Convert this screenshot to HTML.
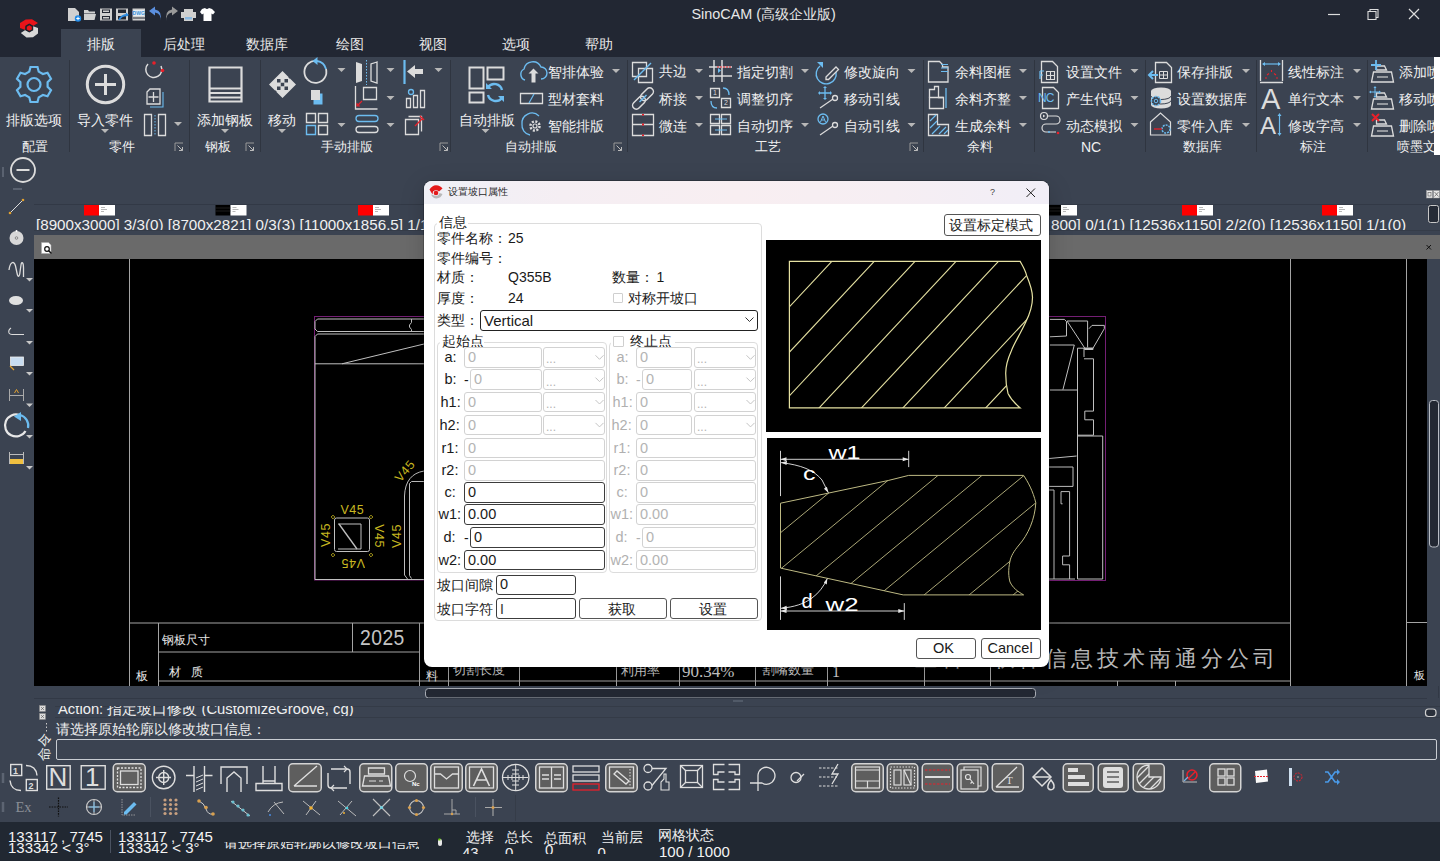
<!DOCTYPE html>
<html><head><meta charset="utf-8">
<style>
*{box-sizing:border-box;margin:0;padding:0}
html,body{width:1440px;height:861px;overflow:hidden;background:#3b4351;font-family:"Liberation Sans",sans-serif;color:#eee;position:relative}
.a{position:absolute}
.t{position:absolute;white-space:nowrap;line-height:1}
svg{position:absolute;overflow:visible}
</style></head><body>
<!-- title bar + tab row -->
<div class="a" style="left:0;top:0;width:1440px;height:57px;background:#222733"></div>
<div class="a" style="left:61px;top:29px;width:80px;height:28px;background:#3b4351"></div>

<!-- logo -->
<svg style="left:20px;top:19px" width="18" height="19" viewBox="0 0 18 19">
<polygon points="0,4 5.7,0.4 12,0.2 18,4 13,7 9,5 5.3,7.7 5.3,11 0,9" fill="#e8141a"/>
<polygon points="0.8,14 5.3,11 9,13 13,11 13,7.3 18,9 18,14.6 13,18.3 6.5,18.5" fill="#d8d8d8"/>
<polygon points="9.3,4.6 13.2,6.8 13.2,11.2 9.3,13.4 5.4,11.2 5.4,6.8" fill="#1b2029"/>
<polygon points="9.3,6.2 11.8,7.7 11.8,10.4 9.3,11.8 6.8,10.4 6.8,7.7" fill="#e8141a"/>
</svg>
<!-- quick access -->
<svg style="left:67px;top:7px" width="146" height="15" viewBox="0 0 146 15">
<path d="M1,1 h7 l4,4 v9 h-11z" fill="#d0d0d0"/><circle cx="11" cy="11.5" r="3.2" fill="#1e88e5"/><path d="M9.3,11.5h3.4M11,9.8v3.4" stroke="#fff" stroke-width="1"/>
<path d="M17,3 h4 l1,1.5 h6 v2 h-11z M17,7 h12 l-1.5,6 h-10.5z" fill="#d0d0d0"/>
<path d="M33,1.5 h12 v12 h-12z" fill="#cfcfcf"/><path d="M35,2.5h8v3.5h-8zM35,9h8v3.5h-8z" fill="#222733"/><path d="M36,3.5h6v1.5h-6zM36,10h6v1.5h-6z" fill="#cfcfcf"/>
<path d="M49,1.5 h12 v12 h-12z" fill="#cfcfcf"/><path d="M51,2.5h8v3.5h-8zM51,9h8v3.5h-8z" fill="#222733"/><path d="M52,13 q2,-5 9,-5" stroke="#2b8ae0" stroke-width="1.8" fill="none"/><path d="M59,5.5 l3,2.5 l-3.5,1.5z" fill="#2b8ae0"/>
<path d="M65.5,1.5 h12.5 v12 h-12.5z" fill="#cfcfcf"/><path d="M66.5,3h10.5v6h-10.5z" fill="#e8eef4"/><text x="71.7" y="8.2" font-size="5" fill="#3a8fd8" text-anchor="middle" font-family="Liberation Sans" font-weight="bold">DWG</text><path d="M66,11h12" stroke="#222733" stroke-width="1"/>
<path d="M93,14 q2,-7 -5,-8.5 v3 l-6,-4.5 l6,-4.5 v3 q8,1.5 5,11.5z" fill="#5b8fdf"/>
<path d="M100,14 q-2,-7 5,-8.5 v3 l6,-4.5 l-6,-4.5 v3 q-8,1.5 -5,11.5z" fill="#9a9a9a"/>
<path d="M117,2h9v3h-9z M114,5h15v6h-15z M117,9h9v5h-9z" fill="#d0d0d0"/><path d="M118,10h7v2.5h-7z" fill="#8ab8e0"/>
<path d="M135,2 l3,-1 q2,2 4,0 l3,1 l3,3 l-2,2.5 l-1.5,-1 v7.5 h-8 v-7.5 l-1.5,1 l-2,-2.5z" fill="#fff"/>
</svg>
<div class="t" style="left:691.5px;top:7px;font-size:14.4px;color:#e8e8e8;letter-spacing:0">SinoCAM (高级企业版)</div>
<!-- window controls -->
<svg style="left:1328px;top:6px" width="95" height="16" viewBox="0 0 95 16">
<path d="M0,8.5h12" stroke="#ddd" stroke-width="1.2"/>
<path d="M40,5.5h8v8h-8z M42,5.5v-2h8v8h-2" stroke="#ddd" stroke-width="1.1" fill="none"/>
<path d="M81,3l10,10M91,3l-10,10" stroke="#ddd" stroke-width="1.2"/>
</svg>
<!-- tabs -->
<div class="t" style="left:87px;top:37px;font-size:14px;color:#f0f0f0">排版</div>
<div class="t" style="left:163px;top:37px;font-size:14px;color:#e8e8e8">后处理</div>
<div class="t" style="left:246px;top:37px;font-size:14px;color:#e8e8e8">数据库</div>
<div class="t" style="left:336px;top:37px;font-size:14px;color:#e8e8e8">绘图</div>
<div class="t" style="left:419px;top:37px;font-size:14px;color:#e8e8e8">视图</div>
<div class="t" style="left:502px;top:37px;font-size:14px;color:#e8e8e8">选项</div>
<div class="t" style="left:585px;top:37px;font-size:14px;color:#e8e8e8">帮助</div>
<!-- ribbon -->
<div class="a" style="left:0;top:57px;width:1440px;height:100px;background:#3b4351"></div>
<!--RIBBON--><div class="a" style="left:0;top:0;width:1435px;height:160px;overflow:hidden"><svg style="left:0;top:0" width="1440" height="160" viewBox="0 0 1440 160"><path d="M69.5,60v92" stroke="#2f3540" stroke-width="1"/><path d="M189.5,60v92" stroke="#2f3540" stroke-width="1"/><path d="M260.5,60v92" stroke="#2f3540" stroke-width="1"/><path d="M450.5,60v92" stroke="#2f3540" stroke-width="1"/><path d="M627.5,60v92" stroke="#2f3540" stroke-width="1"/><path d="M923.5,60v92" stroke="#2f3540" stroke-width="1"/><path d="M1034.5,60v92" stroke="#2f3540" stroke-width="1"/><path d="M1145.5,60v92" stroke="#2f3540" stroke-width="1"/><path d="M1256.5,60v92" stroke="#2f3540" stroke-width="1"/><path d="M1367.5,60v92" stroke="#2f3540" stroke-width="1"/><g transform="translate(34,84.5)" fill="none" stroke="#6cbcf0" stroke-width="2.2"><path d="M-3.5,-17.5h7l1.2,4.6l4.2,2.4l4.6,-1.3l3.5,6l-3.4,3.4v4.8l3.4,3.4l-3.5,6l-4.6,-1.3l-4.2,2.4l-1.2,4.6h-7l-1.2,-4.6l-4.2,-2.4l-4.6,1.3l-3.5,-6l3.4,-3.4v-4.8l-3.4,-3.4l3.5,-6l4.6,1.3l4.2,-2.4z"/><circle r="6.5"/></g><circle cx="105.5" cy="84.5" r="18.2" fill="none" stroke="#dcdcdc" stroke-width="3"/><path d="M105.5,74v21M95,84.5h21" stroke="#dcdcdc" stroke-width="3"/><path d="M101,129h8l-4,4z" fill="#b8b8b8"/><path d="M161,66 a8,8 0 1 1 -13,-2" fill="none" stroke="#dcdcdc" stroke-width="1.5"/><circle cx="154" cy="63" r="1.8" fill="#e8202a"/><circle cx="162.5" cy="70.5" r="1.8" fill="#e8202a"/><path d="M147,92l3,-3h10v15h-13z" fill="none" stroke="#dcdcdc" stroke-width="1.3"/><path d="M150,107h13v-15" fill="none" stroke="#6cbcf0" stroke-width="1.1"/><path d="M153.5,92v10M148.5,97h10" stroke="#dcdcdc" stroke-width="1.3"/><path d="M144.5,114.5h7v21h-7zM158.5,114.5h7v21h-7z" fill="none" stroke="#dcdcdc" stroke-width="1.3"/><path d="M155,115v20" stroke="#6cbcf0" stroke-width="1" stroke-dasharray="1.5,1.5"/><path d="M174,122h8l-4,4z" fill="#b8b8b8"/><path d="M175,151v-8h8" stroke="#999" stroke-width="1" fill="none"/><path d="M177.5,145.5l5,5M182.5,147v3.5h-3.5" stroke="#bbb" stroke-width="1" fill="none"/><path d="M209.5,67.5h32v34h-32z" fill="none" stroke="#dcdcdc" stroke-width="2.2"/><path d="M209.5,88.5h32M209.5,93h32M209.5,97.5h32" stroke="#dcdcdc" stroke-width="1.8"/><path d="M221,129h8l-4,4z" fill="#b8b8b8"/><path d="M246,151v-8h8" stroke="#999" stroke-width="1" fill="none"/><path d="M248.5,145.5l5,5M253.5,147v3.5h-3.5" stroke="#bbb" stroke-width="1" fill="none"/><path d="M282.5,71L290,78.5H275zM282.5,98L290,90.5H275zM269,84.5L276.5,77V92zM296,84.5L288.5,77V92z" fill="#dcdcdc"/><rect x="276" y="78" width="13" height="13" fill="#dcdcdc"/><path d="M277,79h3.5v3.5h-3.5zM284.5,79h3.5v3.5h-3.5zM280.75,82.75h3.5v3.5h-3.5zM277,86.5h3.5v3.5h-3.5zM284.5,86.5h3.5v3.5h-3.5z" fill="#3b4351"/><path d="M278,129h8l-4,4z" fill="#b8b8b8"/><path d="M326,69 a11,11 0 1 1 -9,-8" fill="none" stroke="#dcdcdc" stroke-width="1.8"/><path d="M317,61 a11,11 0 0 1 9,8" fill="none" stroke="#6cbcf0" stroke-width="1.8"/><path d="M312.5,61l5,-4v8z" fill="#6cbcf0"/><path d="M313.5,93.5h9v11h-9z" fill="#6cbcf0"/><path d="M311,90h9v10h-9z" fill="#dcdcdc"/><path d="M306.5,113.5h9v9h-9zM318.5,113.5h9v9h-9zM318.5,125.5h9v9h-9z" fill="none" stroke="#dcdcdc" stroke-width="1.4"/><path d="M306.5,125.5h9v9h-9z" fill="none" stroke="#6cbcf0" stroke-width="1.4"/><path d="M337.5,68h8l-4,4z" fill="#b8b8b8"/><path d="M337.5,123h8l-4,4z" fill="#b8b8b8"/><path d="M356,62l6,2v17l-6,2z" fill="#dcdcdc"/><path d="M377,62l-6,2v17l6,2z" fill="none" stroke="#dcdcdc" stroke-width="1.3"/><path d="M366.5,60v25" stroke="#6cbcf0" stroke-width="1" stroke-dasharray="1.5,1.5"/><path d="M355.5,86v23h22" fill="none" stroke="#dcdcdc" stroke-width="1.3"/><path d="M363.5,87.5h13v12h-13z" fill="none" stroke="#dcdcdc" stroke-width="1.3"/><path d="M362,101l-5,5m0,-3v3h3" fill="none" stroke="#e8202a" stroke-width="1.2"/><path d="M359,115.5h16a2.5,2.5 0 0 1 0,6h-16a2.5,2.5 0 0 1 0,-6z" fill="none" stroke="#6cbcf0" stroke-width="1.3"/><path d="M359,126.5h16a2.5,2.5 0 0 1 0,6h-16a2.5,2.5 0 0 1 0,-6z" fill="none" stroke="#dcdcdc" stroke-width="1.3"/><path d="M386.5,68h8l-4,4z" fill="#b8b8b8"/><path d="M386.5,96h8l-4,4z" fill="#b8b8b8"/><path d="M386.5,123h8l-4,4z" fill="#b8b8b8"/><path d="M404.5,60v24" stroke="#6cbcf0" stroke-width="2.2"/><path d="M407,71.5l8,-6.5v4h8v5h-8v4z" fill="#dcdcdc"/><path d="M406.5,98.5h4v9h-4zM413.5,95.5h4v12h-4zM420.5,90.5h4v17h-4z" fill="none" stroke="#dcdcdc" stroke-width="1.3"/><circle cx="411" cy="92" r="2.5" fill="none" stroke="#6cbcf0" stroke-width="1.3"/><path d="M405.5,119.5h13v15h-13z" fill="none" stroke="#dcdcdc" stroke-width="1.3"/><path d="M408.5,116.5h13v15" fill="none" stroke="#dcdcdc" stroke-width="1.3"/><path d="M415,126l7,-7M420,116l4,4" stroke="#e8202a" stroke-width="1.4"/><path d="M434.5,68h8l-4,4z" fill="#b8b8b8"/><path d="M440,151v-8h8" stroke="#999" stroke-width="1" fill="none"/><path d="M442.5,145.5l5,5M447.5,147v3.5h-3.5" stroke="#bbb" stroke-width="1" fill="none"/><path d="M469.5,67.5h14v21h-14zM487.5,67.5h16v12h-16zM469.5,92.5h14v10h-14z" fill="none" stroke="#dcdcdc" stroke-width="2"/><path d="M502,90a8,8 0 0 0 -14,-3M488,95a8,8 0 0 0 14,3" fill="none" stroke="#6cbcf0" stroke-width="2.4"/><path d="M486,83v6h6z M504,102v-6h-6z" fill="#6cbcf0"/><path d="M481.5,129h8l-4,4z" fill="#b8b8b8"/><path d="M525,80a6,6 0 0 1 -1,-11a9,9 0 0 1 17,-2a6,6 0 0 1 0,12" fill="none" stroke="#6cbcf0" stroke-width="1.4"/><path d="M531.5,82.5v-9h-3l5,-5l5,5h-3v9z" fill="#dcdcdc"/><path d="M612,69h8l-4,4z" fill="#b8b8b8"/><path d="M520.5,93.5h22v10h-22z" fill="none" stroke="#dcdcdc" stroke-width="1.3"/><path d="M529,103l5,-9" stroke="#6cbcf0" stroke-width="1.2"/><path d="M530,135a10,10 0 0 1 -8,-11a10,10 0 0 1 17,-8" fill="none" stroke="#6cbcf0" stroke-width="1.3"/><circle cx="535" cy="126" r="4.5" fill="none" stroke="#dcdcdc" stroke-width="2.5" stroke-dasharray="2,1.5"/><circle cx="535" cy="126" r="2" fill="none" stroke="#dcdcdc" stroke-width="1.2"/><path d="M614,151v-8h8" stroke="#999" stroke-width="1" fill="none"/><path d="M616.5,145.5l5,5M621.5,147v3.5h-3.5" stroke="#bbb" stroke-width="1" fill="none"/><path d="M632.5,62.5h14v14h-14zM638.5,68.5h14v14h-14z" fill="none" stroke="#dcdcdc" stroke-width="1.3"/><path d="M634,80l17,-17" stroke="#6cbcf0" stroke-width="1.4"/><path d="M695,69h8l-4,4z" fill="#b8b8b8"/><g fill="none" stroke="#dcdcdc" stroke-width="1.5"><rect x="631.5" y="99" width="15" height="7.5" rx="3.75" transform="rotate(-45 639 102.75)"/><rect x="639.5" y="90.5" width="15" height="7.5" rx="3.75" transform="rotate(-45 647 94.25)"/></g><path d="M639.5,102l7,-7" stroke="#6cbcf0" stroke-width="1.4"/><path d="M695,96h8l-4,4z" fill="#b8b8b8"/><path d="M632.5,114.5h21v21h-21zM632.5,124.5h21" fill="none" stroke="#dcdcdc" stroke-width="1.3"/><path d="M642,114h2v1.5h-2zM642,123.5h2v2h-2zM642,134.5h2v1.5h-2z" fill="#e8202a"/><path d="M695,123h8l-4,4z" fill="#b8b8b8"/><path d="M714,60v22M722,60v22M709,67h23M709,76h23" stroke="#dcdcdc" stroke-width="1.5"/><path d="M717,67h15" stroke="#e8202a" stroke-width="1" stroke-dasharray="2,1"/><path d="M718,68v5l3,-2.5z" fill="#6cbcf0"/><path d="M801,69h8l-4,4z" fill="#b8b8b8"/><path d="M710.5,88.5h9v9h-9zM721.5,98.5h9v9h-9z" fill="none" stroke="#dcdcdc" stroke-width="1.3"/><path d="M723,88q6,0 6,7M717,108q-6,0 -6,-7" fill="none" stroke="#6cbcf0" stroke-width="1.3"/><path d="M710.5,114.5h9v9h-9zM721.5,114.5h9v9h-9zM710.5,125.5h9v9h-9zM721.5,125.5h9v9h-9z" fill="none" stroke="#dcdcdc" stroke-width="1.3"/><path d="M715,119h12M715,130h12" stroke="#6cbcf0" stroke-width="1.2"/><path d="M801,123h8l-4,4z" fill="#b8b8b8"/><path d="M820,66a10,10 0 1 0 16,6" fill="none" stroke="#6cbcf0" stroke-width="1.4"/><path d="M817,62h6v6z" fill="#6cbcf0"/><path d="M826,77l10,-10l2.5,2.5l-10,10h-2.5z" fill="none" stroke="#dcdcdc" stroke-width="1.3"/><path d="M907.5,69h8l-4,4z" fill="#b8b8b8"/><path d="M825,87v12M819,93h12" stroke="#6cbcf0" stroke-width="1.3"/><path d="M825,86l-2,2h4zM825,100l-2,-2h4zM818,93l2,-2v4zM832,93l-2,-2v4z" fill="#6cbcf0"/><path d="M820,108l13,-9" stroke="#dcdcdc" stroke-width="1.2"/><circle cx="835" cy="98" r="2.5" fill="none" stroke="#dcdcdc" stroke-width="1.3"/><circle cx="823" cy="119" r="5" fill="none" stroke="#6cbcf0" stroke-width="1.3"/><path d="M820.5,122l2.5,-6l2.5,6M821.5,120h3" fill="none" stroke="#6cbcf0" stroke-width="1"/><path d="M820,135l13,-9" stroke="#dcdcdc" stroke-width="1.2"/><circle cx="835" cy="125" r="2.5" fill="none" stroke="#dcdcdc" stroke-width="1.3"/><path d="M907.5,123h8l-4,4z" fill="#b8b8b8"/><path d="M910,151v-8h8" stroke="#999" stroke-width="1" fill="none"/><path d="M912.5,145.5l5,5M917.5,147v3.5h-3.5" stroke="#bbb" stroke-width="1" fill="none"/><path d="M928.5,61.5h11l3,3v2.5h5.5v15h-19.5z" fill="none" stroke="#dcdcdc" stroke-width="1.3"/><path d="M941,64.5h7M941,68h7M941,71.5h7" stroke="#6cbcf0" stroke-width="1.1"/><path d="M1019,69h8l-4,4z" fill="#b8b8b8"/><path d="M929.5,97.5v-8h5v-3h4v11h5" fill="none" stroke="#dcdcdc" stroke-width="1.3"/><path d="M929.5,97.5h14v11h-14z" fill="none" stroke="#dcdcdc" stroke-width="1.3"/><path d="M946,88v20" stroke="#6cbcf0" stroke-width="1.3"/><path d="M1019,96h8l-4,4z" fill="#b8b8b8"/><path d="M928.5,114.5h9v10h11v11h-20z" fill="none" stroke="#dcdcdc" stroke-width="1.3"/><path d="M930,121l6,-6M930,128l7,-7M932,134l8,-8M939,134l7,-7M944,134l4,-4" stroke="#6cbcf0" stroke-width="1.2"/><path d="M1019,123h8l-4,4z" fill="#b8b8b8"/><path d="M1041.5,61.5h11l5,5v16h-16z" fill="none" stroke="#dcdcdc" stroke-width="1.3"/><path d="M1046.5,71.5h8v8h-8zM1050.5,71.5v8M1046.5,75.5h8" fill="none" stroke="#dcdcdc" stroke-width="1.1"/><path d="M1040,71v8M1040,71h4M1040,75h3" stroke="#6cbcf0" stroke-width="1.2" fill="none"/><path d="M1130.5,69h8l-4,4z" fill="#b8b8b8"/><path d="M1042.5,87.5h11l5,5v16h-16z" fill="none" stroke="#dcdcdc" stroke-width="1.3"/><path d="M1130.5,96h8l-4,4z" fill="#b8b8b8"/><circle cx="1044" cy="116" r="3.5" fill="none" stroke="#dcdcdc" stroke-width="1.2"/><path d="M1043,114.5v3l2.3,-1.5z" fill="#dcdcdc"/><path d="M1048,116h8a4,4 0 0 1 0,8h-10a4,4 0 0 0 0,8h10" fill="none" stroke="#dcdcdc" stroke-width="1.2"/><circle cx="1058" cy="133" r="1.3" fill="#e8202a"/><circle cx="1049" cy="132" r="1" fill="#6cbcf0"/><path d="M1130.5,123h8l-4,4z" fill="#b8b8b8"/><path d="M1155.5,62.5h11l5,5v15h-16z" fill="none" stroke="#dcdcdc" stroke-width="1.3"/><path d="M1159.5,71.5h8v7h-8zM1163.5,71.5v7M1159.5,75h8" fill="none" stroke="#dcdcdc" stroke-width="1"/><path d="M1149,75h9M1153,71l-4,4l4,4" stroke="#6cbcf0" stroke-width="2" fill="none"/><path d="M1242,69h8l-4,4z" fill="#b8b8b8"/><ellipse cx="1161" cy="91" rx="10" ry="3.5" fill="#dcdcdc"/><path d="M1151,91v14a10,3.5 0 0 0 20,0v-14" fill="#dcdcdc"/><path d="M1151,96a10,3.5 0 0 0 20,0M1151,100.5a10,3.5 0 0 0 20,0" fill="none" stroke="#3b4351" stroke-width="1"/><circle cx="1156" cy="101" r="4.5" fill="#3b4351" stroke="#6cbcf0" stroke-width="1.6" stroke-dasharray="2,1.2"/><circle cx="1156" cy="101" r="1.8" fill="none" stroke="#6cbcf0" stroke-width="1"/><path d="M1150.5,122l10,-9l10,9v13h-20z" fill="none" stroke="#dcdcdc" stroke-width="1.2"/><circle cx="1166" cy="129" r="4" fill="#3b4351" stroke="#6cbcf0" stroke-width="1.5" stroke-dasharray="2,1"/><path d="M1154,129h8" stroke="#e8202a" stroke-width="1.3"/><path d="M1242,123h8l-4,4z" fill="#b8b8b8"/><path d="M1260.5,60v21M1282.5,60v21M1260,82.5h23" stroke="#dcdcdc" stroke-width="1.3"/><path d="M1263,64h17" stroke="#6cbcf0" stroke-width="1.2"/><path d="M1262,64l3,-2v4zM1281,64l-3,-2v4z" fill="#6cbcf0"/><path d="M1267,75l2,-1.5M1276,75l-2,-1.5M1271.5,70v2M1265,78h2M1276,78h2" stroke="#e8202a" stroke-width="1.1"/><path d="M1353,69h8l-4,4z" fill="#b8b8b8"/><path d="M1353,96h8l-4,4z" fill="#b8b8b8"/><path d="M1279.5,115v19" stroke="#6cbcf0" stroke-width="1.2"/><path d="M1279.5,113l-2,3h4zM1279.5,136l-2,-3h4z" fill="#6cbcf0"/><path d="M1353,123h8l-4,4z" fill="#b8b8b8"/><path d="M1376.5,66h8l2,4h-10zM1373.5,72h18l2,10h-22z" fill="none" stroke="#dcdcdc" stroke-width="1.3"/><path d="M1377,77h11" stroke="#dcdcdc" stroke-width="1.1"/><path d="M1376,60v10M1371,65h10" stroke="#6cbcf0" stroke-width="1.8"/><path d="M1376.5,93h8l2,4h-10zM1373.5,99h18l2,10h-22z" fill="none" stroke="#dcdcdc" stroke-width="1.3"/><path d="M1377,104h11" stroke="#dcdcdc" stroke-width="1.1"/><path d="M1375,87v10M1370,92h10" stroke="#6cbcf0" stroke-width="1"/><path d="M1375,86l-1.5,2h3zM1375,98l-1.5,-2h3zM1369,92l2,-1.5v3zM1381,92l-2,-1.5v3z" fill="#6cbcf0"/><path d="M1376.5,120h8l2,4h-10zM1373.5,126h18l2,10h-22z" fill="none" stroke="#dcdcdc" stroke-width="1.3"/><path d="M1377,131h11" stroke="#dcdcdc" stroke-width="1.1"/><path d="M1372,114l7,7M1379,114l-7,7" stroke="#e8202a" stroke-width="2"/></svg><div class="t" style="left:6px;top:112.5px;font-size:14px;color:#f0f0f0">排版选项</div><div class="t" style="left:21.5px;top:140.0px;font-size:13px;color:#f0f0f0">配置</div><div class="t" style="left:77px;top:112.5px;font-size:14px;color:#f0f0f0">导入零件</div><div class="t" style="left:108.5px;top:140.0px;font-size:13px;color:#f0f0f0">零件</div><div class="t" style="left:197px;top:112.5px;font-size:14px;color:#f0f0f0">添加钢板</div><div class="t" style="left:204.5px;top:140.0px;font-size:13px;color:#f0f0f0">钢板</div><div class="t" style="left:268px;top:112.5px;font-size:14px;color:#f0f0f0">移动</div><div class="t" style="left:321.0px;top:140.0px;font-size:13px;color:#f0f0f0">手动排版</div><div class="t" style="left:459px;top:112.5px;font-size:14px;color:#f0f0f0">自动排版</div><div class="t" style="left:548px;top:64.5px;font-size:14px;color:#f0f0f0">智排体验</div><div class="t" style="left:548px;top:91.5px;font-size:14px;color:#f0f0f0">型材套料</div><div class="t" style="left:548px;top:118.5px;font-size:14px;color:#f0f0f0">智能排版</div><div class="t" style="left:504.5px;top:140.0px;font-size:13px;color:#f0f0f0">自动排版</div><div class="t" style="left:659px;top:63.5px;font-size:14px;color:#f0f0f0">共边</div><div class="t" style="left:659px;top:91.5px;font-size:14px;color:#f0f0f0">桥接</div><div class="t" style="left:659px;top:118.5px;font-size:14px;color:#f0f0f0">微连</div><div class="t" style="left:737px;top:64.5px;font-size:14px;color:#f0f0f0">指定切割</div><div class="t" style="left:713px;top:89px;font-size:7px;color:#ddd">1</div><div class="t" style="left:724px;top:99px;font-size:7px;color:#ddd">2</div><div class="t" style="left:737px;top:91.5px;font-size:14px;color:#f0f0f0">调整切序</div><div class="t" style="left:737px;top:118.5px;font-size:14px;color:#f0f0f0">自动切序</div><div class="t" style="left:844px;top:64.5px;font-size:14px;color:#f0f0f0">修改旋向</div><div class="t" style="left:844px;top:91.5px;font-size:14px;color:#f0f0f0">移动引线</div><div class="t" style="left:844px;top:118.5px;font-size:14px;color:#f0f0f0">自动引线</div><div class="t" style="left:754.5px;top:140.0px;font-size:13px;color:#f0f0f0">工艺</div><div class="t" style="left:955px;top:64.5px;font-size:14px;color:#f0f0f0">余料图框</div><div class="t" style="left:955px;top:91.5px;font-size:14px;color:#f0f0f0">余料齐整</div><div class="t" style="left:955px;top:118.5px;font-size:14px;color:#f0f0f0">生成余料</div><div class="t" style="left:967.0px;top:140.0px;font-size:13px;color:#f0f0f0">余料</div><div class="t" style="left:1066px;top:64.5px;font-size:14px;color:#f0f0f0">设置文件</div><div class="t" style="left:1038px;top:92px;font-size:12px;color:#6cbcf0;letter-spacing:-1px">NC</div><div class="t" style="left:1066px;top:91.5px;font-size:14px;color:#f0f0f0">产生代码</div><div class="t" style="left:1066px;top:118.5px;font-size:14px;color:#f0f0f0">动态模拟</div><div class="t" style="left:1081px;top:139.5px;font-size:14px;color:#f0f0f0">NC</div><div class="t" style="left:1177px;top:64.5px;font-size:14px;color:#f0f0f0">保存排版</div><div class="t" style="left:1177px;top:91.5px;font-size:14px;color:#f0f0f0">设置数据库</div><div class="t" style="left:1177px;top:118.5px;font-size:14px;color:#f0f0f0">零件入库</div><div class="t" style="left:1182.5px;top:140.0px;font-size:13px;color:#f0f0f0">数据库</div><div class="t" style="left:1288px;top:64.5px;font-size:14px;color:#f0f0f0">线性标注</div><div class="t" style="left:1261px;top:84.5px;font-size:29px;color:#dcdcdc">A</div><div class="t" style="left:1288px;top:91.5px;font-size:14px;color:#f0f0f0">单行文本</div><div class="t" style="left:1260px;top:113.5px;font-size:24px;color:#dcdcdc">A</div><div class="t" style="left:1288px;top:118.5px;font-size:14px;color:#f0f0f0">修改字高</div><div class="t" style="left:1300.0px;top:140.0px;font-size:13px;color:#f0f0f0">标注</div><div class="t" style="left:1399px;top:64.5px;font-size:14px;color:#f0f0f0">添加喷墨</div><div class="t" style="left:1399px;top:91.5px;font-size:14px;color:#f0f0f0">移动喷墨</div><div class="t" style="left:1399px;top:118.5px;font-size:14px;color:#f0f0f0">删除喷墨</div><div class="t" style="left:1397px;top:140.0px;font-size:13px;color:#f0f0f0">喷墨文本</div></div><div class="a" style="left:1434px;top:57px;width:6px;height:98px;background:#fff"></div><!--/RIBBON-->
<!-- tab strip -->
<div class="a" style="left:34px;top:204px;width:1406px;height:28px;background:#3b4351;border-top:1px solid #323946"></div>
<!-- canvas header -->
<div class="a" style="left:34px;top:235px;width:1406px;height:24px;background:#6a6a6a"></div>
<!-- canvas -->
<div class="a" style="left:34px;top:259px;width:1393px;height:427px;background:#000"></div>
<!--CANVAS--><svg style="left:0;top:0" width="1440" height="861" viewBox="0 0 1440 861"><path d="M3,167v10" stroke="#5a6270" stroke-width="2"/><path d="M13,189h9" stroke="#5a6270" stroke-width="2"/><circle cx="23" cy="170" r="12" fill="none" stroke="#dcdcdc" stroke-width="1.8"/><path d="M16.5,170h13" stroke="#dcdcdc" stroke-width="2"/><path d="M10,213l13,-13" stroke="#dcdcdc" stroke-width="1"/><circle cx="10" cy="213" r="1.3" fill="#e0a030"/><circle cx="23" cy="200" r="1.3" fill="#e0a030"/><circle cx="16.5" cy="238" r="7" fill="#d8d8d8"/><circle cx="16.5" cy="238" r="1.3" fill="none" stroke="#777" stroke-width=".8"/><circle cx="16.5" cy="231" r="1" fill="#fff"/><path d="M9,270C10,262 14,260 15.5,266L17,273C18,278 19.5,277 20,272L21,265C21.5,261 23.5,262 23.5,268V277" fill="none" stroke="#dcdcdc" stroke-width="1.3"/><ellipse cx="16" cy="300.5" rx="7" ry="4.5" fill="#e0e0e0"/><path d="M11,328q-3,2 -2,5q1,1.5 3,1.5h12" fill="none" stroke="#dcdcdc" stroke-width="1.1"/><rect x="10.5" y="357" width="13" height="8.5" fill="#c8dcf0" stroke="#eee" stroke-width=".8"/><path d="M10,366l4,4" stroke="#e0a030" stroke-width="1.3"/><path d="M9.5,389v12M23.5,389v12M10,395.5h13" stroke="#aaa" stroke-width="1"/><path d="M14.5,393l2,-3.5l2,3.5" fill="none" stroke="#e0a030" stroke-width="1"/><path d="M25.5,431a11,11 0 1 1 -6,-16" fill="none" stroke="#e8e8e8" stroke-width="2.2"/><path d="M20,415a11,11 0 0 1 8,13" fill="none" stroke="#6cbcf0" stroke-width="2.2"/><path d="M14,416.5l7,-4.5v9z" fill="#6cbcf0"/><path d="M9.5,452v12M23.5,452v12M10,454.5h13" stroke="#bbb" stroke-width="1"/><rect x="10" y="459" width="13" height="5" fill="#f0c040"/><path d="M26,278h7l-3.5,3.5z" fill="#c8c8c8"/><path d="M26,309h7l-3.5,3.5z" fill="#c8c8c8"/><path d="M26,341h7l-3.5,3.5z" fill="#c8c8c8"/><path d="M26,372h7l-3.5,3.5z" fill="#c8c8c8"/><path d="M26,403.5h7l-3.5,3.5z" fill="#c8c8c8"/><path d="M26,435h7l-3.5,3.5z" fill="#c8c8c8"/><path d="M26,466h7l-3.5,3.5z" fill="#c8c8c8"/><rect x="84" y="205" width="15" height="10.5" fill="#f00"/><rect x="99" y="205" width="16" height="10.5" fill="#fff"/><path d="M101,207.5h4M101,209.5h6M101,211.5h3" stroke="#888" stroke-width=".6"/><rect x="215.5" y="205" width="15" height="10.5" fill="#000"/><rect x="230.5" y="205" width="16" height="10.5" fill="#fff"/><path d="M232.5,207.5h4M232.5,209.5h6M232.5,211.5h3" stroke="#888" stroke-width=".6"/><path d="M215.5,208h15M215.5,211h15" stroke="#333" stroke-width=".6"/><rect x="358" y="205" width="15" height="10.5" fill="#f00"/><rect x="373" y="205" width="16" height="10.5" fill="#fff"/><path d="M375,207.5h4M375,209.5h6M375,211.5h3" stroke="#888" stroke-width=".6"/><rect x="1046" y="205" width="15" height="10.5" fill="#000"/><rect x="1061" y="205" width="16" height="10.5" fill="#fff"/><path d="M1063,207.5h4M1063,209.5h6M1063,211.5h3" stroke="#888" stroke-width=".6"/><path d="M1046,208h15M1046,211h15" stroke="#333" stroke-width=".6"/><rect x="1182" y="205" width="15" height="10.5" fill="#f00"/><rect x="1197" y="205" width="16" height="10.5" fill="#fff"/><path d="M1199,207.5h4M1199,209.5h6M1199,211.5h3" stroke="#888" stroke-width=".6"/><rect x="1322" y="205" width="15" height="10.5" fill="#f00"/><rect x="1337" y="205" width="16" height="10.5" fill="#fff"/><path d="M1339,207.5h4M1339,209.5h6M1339,211.5h3" stroke="#888" stroke-width=".6"/><rect x="1426.5" y="190.5" width="6" height="7.5" fill="#e8e8e8" stroke="#999" stroke-width=".5"/><rect x="1433.5" y="190.5" width="6" height="7.5" fill="#e8e8e8" stroke="#999" stroke-width=".5"/><path d="M1434.5,192l4,4.5M1438.5,192l-4,4.5" stroke="#555" stroke-width=".7"/><rect x="1428" y="192.5" width="3" height="3.5" fill="none" stroke="#555" stroke-width=".6"/><rect x="1428.5" y="205.5" width="10" height="17" rx="2" fill="#252b36" stroke="#c8c8c8" stroke-width="1"/><path d="M41.5,242.5h7l2.5,2.5v8.5h-9.5z" fill="#fff" stroke="#aaa" stroke-width=".6"/><circle cx="47" cy="249" r="2.3" fill="none" stroke="#111" stroke-width="1.2"/><path d="M48.5,250.5l3,3" stroke="#111" stroke-width="1.5"/><path d="M1426.5,245l4.5,4.5M1431,245l-4.5,4.5" stroke="#111" stroke-width="1"/><path d="M34,230.5H1440" stroke="#353c48" stroke-width="1"/><path d="M129.5,259L129.5,686" stroke="#a4a4a4" stroke-width="1"/><path d="M1290.5,259L1290.5,686" stroke="#a4a4a4" stroke-width="1"/><path d="M1406.5,259L1406.5,686" stroke="#a4a4a4" stroke-width="1"/><path d="M129.5,623L1290.5,623" stroke="#a4a4a4" stroke-width="1"/><path d="M1406.5,622.5L1427,622.5" stroke="#a4a4a4" stroke-width="1"/><path d="M158.5,623L158.5,686" stroke="#a4a4a4" stroke-width="1"/><path d="M352.5,623L352.5,652" stroke="#a4a4a4" stroke-width="1"/><path d="M158.5,652L419,652" stroke="#a4a4a4" stroke-width="1"/><path d="M419.5,623L419.5,686" stroke="#a4a4a4" stroke-width="1"/><path d="M158.5,681L1290.5,681" stroke="#a4a4a4" stroke-width="1"/><path d="M448.5,667L448.5,686" stroke="#a4a4a4" stroke-width="1"/><path d="M519.5,667L519.5,686" stroke="#a4a4a4" stroke-width="1"/><path d="M616.5,667L616.5,686" stroke="#a4a4a4" stroke-width="1"/><path d="M679.5,667L679.5,686" stroke="#a4a4a4" stroke-width="1"/><path d="M755.5,667L755.5,686" stroke="#a4a4a4" stroke-width="1"/><path d="M827.5,667L827.5,686" stroke="#a4a4a4" stroke-width="1"/><path d="M924.5,667L924.5,686" stroke="#a4a4a4" stroke-width="1"/><path d="M990.5,667L990.5,686" stroke="#a4a4a4" stroke-width="1"/><path d="M1117.5,681L1117.5,686" stroke="#a4a4a4" stroke-width="1"/><path d="M1175.5,681L1175.5,686" stroke="#a4a4a4" stroke-width="1"/><rect x="314.5" y="316.5" width="110" height="263.5" fill="none" stroke="#741f74" stroke-width="1"/><rect x="1040" y="316.5" width="65.5" height="264" fill="none" stroke="#741f74" stroke-width="1"/><path d="M424,319H317.5L315,321.5V329L317.5,331.5H424M411.5,319V322.5L409.5,325V327L411.5,329.5V331.5" fill="none" stroke="#c0c0c0" stroke-width="1"/><path d="M424,334H317.5L315,336.5V579.5H424M315,363.8H424M342,363.8L424,344" fill="none" stroke="#c0c0c0" stroke-width="1"/><path d="M424,471C412,473 405,481 404.5,496V575L407.5,579" fill="none" stroke="#c0c0c0" stroke-width="1"/><path d="M424,481.5H411.5L409.5,483.5V575.5L411.5,578.5" fill="none" stroke="#c0c0c0" stroke-width="1"/><rect x="334.5" y="518" width="35" height="33.5" rx="2" fill="none" stroke="#c0c0c0" stroke-width="1"/><path d="M338,524h23v25h-23" fill="none" stroke="#c0c0c0" stroke-width="1"/><path d="M339,524l18,25" stroke="#c0c0c0" stroke-width="1.3"/><rect x="331.7" y="515.7" width="2.6" height="2.6" fill="none" stroke="#c8b820" stroke-width=".8" transform="rotate(45 333 517)"/><rect x="369.7" y="515.7" width="2.6" height="2.6" fill="none" stroke="#c8b820" stroke-width=".8" transform="rotate(45 371 517)"/><rect x="331.7" y="553.7" width="2.6" height="2.6" fill="none" stroke="#c8b820" stroke-width=".8" transform="rotate(45 333 555)"/><rect x="369.7" y="553.7" width="2.6" height="2.6" fill="none" stroke="#c8b820" stroke-width=".8" transform="rotate(45 371 555)"/><path d="M1049.9,319.4H1064.5L1066.5,321.7V336L1049.9,336.8M1067,321H1087.6V347.4M1067,321L1084.8,348.2M1089,328.7L1092,325.4H1104.3V328.7L1093,348.2M1049.9,345H1074.3L1062.9,389.7M1049.9,390H1077.5M1077.5,348.2H1084V357M1084,358.8H1093.5V411.1H1084.8V419.8H1093.5V435.2H1077.5M1077.5,348.2V579M1077.5,436H1102.7V579H1077.5M1049,458.5L1076.6,456M1049,467H1073V486.4H1049M1049,490H1054V579M1061,491.6H1069.6V556H1062.6V564.8H1069.6V579M1061,491.6V503.8H1062.6M1049,579H1075" fill="none" stroke="#c0c0c0" stroke-width="1"/><rect x="1084" y="347.5" width="9.5" height="2.5" rx="1" fill="#c0c0c0"/><rect x="425.5" y="688.5" width="610" height="9.5" rx="3" fill="#232833" stroke="#a8acb4" stroke-width="1"/><path d="M733,701h10" stroke="#5a6270" stroke-width="1.5"/><rect x="1429.5" y="400.5" width="9" height="146.5" rx="3" fill="#232833" stroke="#b8bcc4" stroke-width="1"/></svg><div class="a" style="left:34px;top:217px;width:1392px;height:13px;overflow:hidden"><div class="t" style="left:2px;top:0px;font-size:15.2px;color:#f0f0f0">[8900x3000] 3/3(0) [8700x2821] 0/3(3) [11000x1856.5] 1/1(0)</div><div class="t" style="left:1017px;top:0px;font-size:15.35px;color:#f0f0f0">800] 0/1(1) [12536x1150] 2/2(0) [12536x1150] 1/1(0)</div></div><div class="t" style="left:337.4px;top:502.6px;width:30px;height:14px;line-height:14px;text-align:center;font-size:12.5px;color:#c8b820;transform:rotate(0deg);font-family:'Liberation Sans',sans-serif;letter-spacing:0.5px">V45</div><div class="t" style="left:310.8px;top:528.2px;width:30px;height:14px;line-height:14px;text-align:center;font-size:12.5px;color:#c8b820;transform:rotate(-90deg);font-family:'Liberation Sans',sans-serif;letter-spacing:0.5px">V45</div><div class="t" style="left:364.3px;top:528.5px;width:30px;height:14px;line-height:14px;text-align:center;font-size:12.5px;color:#c8b820;transform:rotate(90deg);font-family:'Liberation Sans',sans-serif;letter-spacing:0.5px">V45</div><div class="t" style="left:337.5px;top:555.7px;width:30px;height:14px;line-height:14px;text-align:center;font-size:12.5px;color:#c8b820;transform:rotate(180deg);font-family:'Liberation Sans',sans-serif;letter-spacing:0.5px">V45</div><div class="t" style="left:381.6px;top:529.3px;width:30px;height:14px;line-height:14px;text-align:center;font-size:12.5px;color:#c8b820;transform:rotate(-90deg);font-family:'Liberation Sans',sans-serif;letter-spacing:0.5px">V45</div><div class="t" style="left:389.5px;top:463.5px;width:30px;height:14px;line-height:14px;text-align:center;font-size:12.5px;color:#c8b820;transform:rotate(-50deg);font-family:'Liberation Sans',sans-serif;letter-spacing:0.5px">V45</div><div class="t" style="left:162px;top:634px;font-size:12px;color:#e8e8e8">钢板尺寸</div><div class="t" style="left:169px;top:666px;font-size:12px;color:#e8e8e8;letter-spacing:10px">材质</div><div class="t" style="left:136px;top:670px;font-size:12px;color:#e8e8e8">板</div><div class="t" style="left:426px;top:670px;font-size:12px;color:#e8e8e8">料</div><div class="t" style="left:1414px;top:670px;font-size:11px;color:#e8e8e8">板</div><div class="t" style="left:359.5px;top:626.5px;font-size:22px;color:#c4c4c4;transform:scaleX(0.88);transform-origin:left top;letter-spacing:0.5px">2025</div><div class="a" style="left:424px;top:667px;width:625px;height:19px;overflow:hidden"><div class="t" style="left:29px;top:-4px;font-size:13px;color:#cfcfcf">切割长度</div><div class="t" style="left:197px;top:-3px;font-size:13px;color:#cfcfcf">利用率</div><div class="t" style="left:258px;top:-4px;font-size:17px;color:#cfcfcf;font-family:'Liberation Serif',serif">90.34%</div><div class="t" style="left:338px;top:-4px;font-size:13px;color:#cfcfcf">割嘴数量</div><div class="t" style="left:408px;top:-3px;font-size:16px;color:#cfcfcf;font-family:'Liberation Serif',serif">1</div></div><div class="t" style="left:915px;top:648px;font-size:22px;color:#b8b8b8;letter-spacing:4px">主科工软件信息技术南通分公司</div><!--/CANVAS-->
<!-- status bar -->
<div class="a" style="left:0;top:822px;width:1440px;height:39px;background:#212832"></div>
<!--BOTTOM--><svg style="left:0;top:0" width="1440" height="861" viewBox="0 0 1440 861"><path d="M55,706.5H1440M55,717.5H1440" stroke="#343b47" stroke-width="1"/><path d="M34,698.5H1427M1438.5,686V698" stroke="#323946" stroke-width="1"/><rect x="39.5" y="705.5" width="6" height="6" fill="#ddd" stroke="#888" stroke-width=".5"/><rect x="39.5" y="713.5" width="6" height="6" fill="#ddd" stroke="#888" stroke-width=".5"/><path d="M41,707l3,3M44,707l-3,3M41,715l3,3M44,715l-3,3" stroke="#555" stroke-width=".6"/><path d="M46.5,723v1.5M46.5,726.5v1.5M46.5,730v1.5" stroke="#ccc" stroke-width="1"/><rect x="1425.5" y="709" width="10.5" height="7.5" rx="3" fill="#2a303b" stroke="#d0d0d0" stroke-width="1.2"/><path d="M3,773v10M3,802v10" stroke="#5c6472" stroke-width="2.5"/><g fill="none" stroke="#dedede" stroke-width="1.4"><rect x="10.7" y="764.5" width="11" height="11"/><rect x="26.3" y="779.5" width="11" height="11"/><path d="M26,765.5q10,0 11,10M21,790.5q-10,0 -11,-10"/><rect x="46.7" y="765.7" width="23.5" height="23.5"/><rect x="81.2" y="765.7" width="24" height="23.5"/></g><text x="13" y="774" font-size="9" fill="#dedede" font-family="Liberation Sans" font-weight="bold">1</text><text x="28.5" y="789" font-size="9" fill="#dedede" font-family="Liberation Sans" font-weight="bold">2</text><rect x="113.25" y="763.75" width="32.0" height="28.0" rx="4" fill="#5e5e5e" stroke="#d4d4d4" stroke-width="1.5"/><rect x="117.5" y="768" width="23.5" height="19.5" fill="none" stroke="#dedede" stroke-width="1.3" stroke-dasharray="2,1.5"/><rect x="120.5" y="771" width="17.5" height="13.5" fill="#606060" stroke="#dedede" stroke-width="1.3"/><g fill="none" stroke="#dedede" stroke-width="1.4"><circle cx="163.7" cy="777.5" r="11.3"/><circle cx="163.7" cy="777.5" r="5"/><path d="M163.7,770v15M156,777.5h15"/><path d="M186,775.5h8M204.5,775.5h8M194,766v26M204.5,766v26"/><path d="M196,778l7,-3M196,782l7,-3M196,786l7,-3M196,790l7,-3" stroke-width="1"/><path d="M221,784v-17h26v17M227,792v-14l7,-6l7,6v14"/><path d="M256,783.5h26v7h-26zM263,766v17M275,766v17M263,781h12"/></g><rect x="288.75" y="763.75" width="32.5" height="28.0" rx="4" fill="#5e5e5e" stroke="#d4d4d4" stroke-width="1.5"/><path d="M294,786l23,-20M294,786h23" fill="none" stroke="#dedede" stroke-width="1.4"/><path d="M331,769h16a3,3 0 0 1 3,3v12M347,788h-16a3,3 0 0 1 -3,-3v-12" fill="none" stroke="#dedede" stroke-width="1.4"/><path d="M344,766l3,3l-3,3M334,785l-3,3l3,3" fill="none" stroke="#dedede" stroke-width="1.2"/><rect x="359.75" y="763.75" width="32.0" height="28.0" rx="4" fill="#5e5e5e" stroke="#d4d4d4" stroke-width="1.5"/><path d="M368.5,768h16v6h-16zM364.5,776h24l2,10h-28z" fill="none" stroke="#dedede" stroke-width="1.3"/><path d="M369,781h7M379,781h4" stroke="#dedede" stroke-width="1.2"/><rect x="395.75" y="763.75" width="31.5" height="28.0" rx="4" fill="#5e5e5e" stroke="#d4d4d4" stroke-width="1.5"/><circle cx="410" cy="776" r="5.5" fill="none" stroke="#dedede" stroke-width="1.2"/><text x="412" y="786" font-size="6" fill="#fff" font-family="Liberation Sans" font-weight="bold">Nc</text><rect x="430.75" y="763.75" width="31.5" height="28.0" rx="4" fill="#5e5e5e" stroke="#d4d4d4" stroke-width="1.5"/><rect x="434.5" y="767" width="24" height="21" fill="none" stroke="#dedede" stroke-width="1.3"/><path d="M434.5,774h6l6,5l6,-5h6" fill="none" stroke="#dedede" stroke-width="1.3"/><rect x="465.75" y="763.75" width="31.5" height="28.0" rx="4" fill="#5e5e5e" stroke="#d4d4d4" stroke-width="1.5"/><rect x="469.5" y="767" width="24" height="21" fill="none" stroke="#dedede" stroke-width="1.3"/><path d="M473.5,786l8,-17l8,17M476,780h11" fill="none" stroke="#dedede" stroke-width="1.6"/><g fill="none" stroke="#dedede" stroke-width="1.3"><circle cx="515.7" cy="777.5" r="13.2"/><path d="M515.7,765v25M503,777.5h25M512,770h7M512,774h7M512,781h7M512,785h7M508,775v5M512,775v5M519,775v5M523,775v5" stroke-width="1"/></g><rect x="535.75" y="763.75" width="31.5" height="28.0" rx="4" fill="#5e5e5e" stroke="#d4d4d4" stroke-width="1.5"/><g fill="none" stroke="#dedede" stroke-width="1.3"><rect x="539.5" y="767" width="24" height="21"/><path d="M551.5,767v21M542,775h7M542,779h7M554,775h7M554,779h7"/></g><g fill="none" stroke-width="1.3"><rect x="573" y="766" width="26" height="6" stroke="#dedede"/><rect x="573" y="775" width="26" height="6" stroke="#dedede"/><rect x="573" y="784" width="26" height="6" stroke="#e8202a"/></g><rect x="605.75" y="763.75" width="31.5" height="28.0" rx="4" fill="#5e5e5e" stroke="#d4d4d4" stroke-width="1.5"/><g fill="none" stroke="#dedede" stroke-width="1.3"><rect x="609.5" y="767" width="24" height="21"/><path d="M614,774l12,10l3,-3l-12,-10z"/></g><path d="M630,769v17" stroke="#ddd" stroke-dasharray="1.5,1.5"/><g fill="none" stroke="#dedede" stroke-width="1.3"><circle cx="648" cy="768.5" r="4"/><circle cx="648" cy="786" r="4"/><path d="M652,768.5h14l-14,17"/><path d="M661,790v-8l3,-3v-5h2v8h3v8z" stroke-width="1.1"/><rect x="680.5" y="765.5" width="22" height="22"/><rect x="685.5" y="770.5" width="12" height="12"/><path d="M680.5,765.5l5,5M702.5,765.5l-5,5M680.5,787.5l5,-5M702.5,787.5l-5,-5"/><path d="M724.5,764.5H713.5V774.5H718V772H724.5M728.5,764.5H739.5V774.5H735V772H728.5M724.5,789.5H713.5V779.5H718V782H724.5M728.5,789.5H739.5V779.5H735V782H728.5"/><path d="M758,791V775M750,783H762A8.5,8.5 0 1 0 758,775"/><circle cx="796" cy="777.5" r="5"/><path d="M797,781l7,-7"/><path d="M819,768h20M819,777h18M819,786h20" stroke-dasharray="2.5,1.5" stroke-width="1.2"/><path d="M838,764l-6,10h6l-6,10" stroke-width="1.3"/></g><rect x="851.75" y="763.75" width="31.5" height="28.0" rx="4" fill="#5e5e5e" stroke="#d4d4d4" stroke-width="1.5"/><g fill="none" stroke="#dedede" stroke-width="1.2"><rect x="855.5" y="767" width="24" height="21"/><path d="M855.5,770h24M855.5,781h24M867.5,781v7"/></g><rect x="887.25" y="763.75" width="30.5" height="28.0" rx="4" fill="#5e5e5e" stroke="#d4d4d4" stroke-width="1.5"/><g fill="none" stroke="#dedede" stroke-width="1.2"><rect x="890.5" y="767" width="24" height="21" stroke-dasharray="1.5,1.5"/><rect x="894" y="770" width="7" height="15"/><rect x="904" y="770" width="7" height="15"/><path d="M904,770l7,15"/></g><rect x="922.25" y="763.75" width="30.5" height="28.0" rx="4" fill="#5e5e5e" stroke="#d4d4d4" stroke-width="1.5"/><path d="M925,770h25M925,784h25" stroke="#e8202a" stroke-width="1.2" stroke-dasharray="2.5,1.5"/><path d="M925,777h25" stroke="#dedede" stroke-width="2"/><rect x="957.25" y="763.75" width="30.5" height="28.0" rx="4" fill="#5e5e5e" stroke="#d4d4d4" stroke-width="1.5"/><g fill="none" stroke="#dedede" stroke-width="1.2"><rect x="961" y="770" width="17" height="19"/><path d="M964,770v-3h17v19h-3"/><circle cx="968" cy="777" r="2.5"/><path d="M970,779l4,5M972,782l-1.5,1.5"/></g><rect x="992.25" y="763.75" width="31.0" height="28.0" rx="4" fill="#5e5e5e" stroke="#d4d4d4" stroke-width="1.5"/><path d="M996,787l21,-20M996,787h23" fill="none" stroke="#dedede" stroke-width="1.3"/><text x="1006" y="784" font-size="11" fill="#dedede" font-family="Liberation Serif">T</text><g fill="none" stroke="#dedede" stroke-width="1.5"><path d="M1033,777l9,-9l9,9l-9,9z"/><path d="M1033,777h18"/><path d="M1051,780q5,6 2,9q-3,2 -5,-1q-1,-3 3,-8z"/></g><rect x="1063.25" y="763.75" width="30.0" height="28.0" rx="4" fill="#5e5e5e" stroke="#d4d4d4" stroke-width="1.5"/><path d="M1068,768h10v4h-10zM1068,775h17v4h-17zM1068,782h21v4h-21z" fill="#dedede"/><rect x="1098.25" y="763.75" width="30.0" height="28.0" rx="4" fill="#5e5e5e" stroke="#d4d4d4" stroke-width="1.5"/><rect x="1103" y="767" width="20" height="21" rx="3" fill="#dedede"/><path d="M1107,772h12M1107,777h12M1107,782h12" stroke="#5e5e5e" stroke-width="1.6"/><rect x="1133.25" y="763.75" width="31.0" height="28.0" rx="4" fill="#5e5e5e" stroke="#d4d4d4" stroke-width="1.5"/><clipPath id="pie"><path d="M1149,765a12,12 0 1 0 12,12h-12z"/></clipPath><path d="M1149,765a12,12 0 1 0 12,12h-12z" fill="none" stroke="#dedede" stroke-width="1.3"/><g clip-path="url(#pie)" stroke="#dedede" stroke-width="1.3"><path d="M1135,780l14,-14M1137,786l18,-18M1141,790l22,-22M1147,792l18,-18M1153,792l14,-14"/></g><path d="M1183,770v12h14" fill="none" stroke="#bbb" stroke-width="1"/><circle cx="1192" cy="775" r="5" fill="none" stroke="#e8202a" stroke-width="1.6"/><path d="M1188.5,778.5l7,-7" stroke="#e8202a" stroke-width="1.4"/><path d="M1184,781l4,-4" stroke="#7ab0e0" stroke-width="1.2"/><rect x="1209.75" y="763.75" width="31.0" height="28.0" rx="4" fill="#5e5e5e" stroke="#d4d4d4" stroke-width="1.5"/><g fill="none" stroke="#dedede" stroke-width="1.3"><rect x="1218" y="769" width="7" height="7"/><rect x="1227" y="769" width="7" height="7"/><rect x="1218" y="778" width="7" height="7"/><rect x="1227" y="778" width="7" height="7"/></g><path d="M1255,771l12,-1.5l1,12l-12,1.5z" fill="#fafafa"/><path d="M1254,776.5h15" stroke="#e8202a" stroke-width="1" stroke-dasharray="2,1"/><rect x="1289" y="768" width="3" height="18" fill="#cfe0f0"/><circle cx="1298" cy="777" r="4" fill="none" stroke="#e8202a" stroke-width="1" stroke-dasharray="2,1"/><circle cx="1298" cy="777" r="1" fill="#888"/><path d="M1325,772h3l7,10h3M1325,782h3l7,-10h3" fill="none" stroke="#4a9ae8" stroke-width="1.6"/><path d="M1337,769l3,3l-3,3zM1337,779l3,3l-3,3z" fill="#4a9ae8"/><path d="M515.5,795v26" stroke="#353c48" stroke-width="1"/><path d="M150.5,797v20M475.5,797v20" stroke="#4a5260" stroke-width="1"/><path d="M58.5,797.5v19M49,807h19" stroke="#111" stroke-width="1.2" stroke-dasharray="1.6,1"/><circle cx="94" cy="807" r="7.5" fill="none" stroke="#c8c8c8" stroke-width="1.2"/><path d="M94,800v14M87,807h14" stroke="#c8c8c8" stroke-width="1"/><circle cx="94" cy="807" r="4" fill="none" stroke="#6cbcf0" stroke-width="0" /><path d="M89,807h10M94,802v10" stroke="#6cbcf0" stroke-width=".8"/><path d="M122,799v16h14" fill="none" stroke="#aaa" stroke-width=".8" stroke-dasharray="1.5,1"/><path d="M124,812l10,-10l2.5,2.5l-10,10h-2.5z" fill="#6cbcf0"/><circle cx="165" cy="800" r="1.6" fill="#c8a080"/><circle cx="165" cy="804.5" r="1.6" fill="#c8a080"/><circle cx="165" cy="809" r="1.6" fill="#c8a080"/><circle cx="165" cy="813.5" r="1.6" fill="#c8a080"/><circle cx="170.5" cy="800" r="1.6" fill="#c8a080"/><circle cx="170.5" cy="804.5" r="1.6" fill="#c8a080"/><circle cx="170.5" cy="809" r="1.6" fill="#c8a080"/><circle cx="170.5" cy="813.5" r="1.6" fill="#c8a080"/><circle cx="176" cy="800" r="1.6" fill="#c8a080"/><circle cx="176" cy="804.5" r="1.6" fill="#c8a080"/><circle cx="176" cy="809" r="1.6" fill="#c8a080"/><circle cx="176" cy="813.5" r="1.6" fill="#c8a080"/><path d="M199,801q5,2 7,8t7,5" fill="none" stroke="#ccc" stroke-width="1"/><circle cx="199" cy="801" r="1.8" fill="#d8a050"/><circle cx="206" cy="807.5" r="1.8" fill="#d8a050"/><circle cx="213" cy="814" r="1.8" fill="#d8a050"/><path d="M231,801l19,15" fill="none" stroke="#ccc" stroke-width="1"/><circle cx="233" cy="802" r="1.6" fill="#6cc0d0"/><circle cx="238" cy="806" r="1.6" fill="#6cc0d0"/><circle cx="243" cy="810" r="1.6" fill="#6cc0d0"/><circle cx="248" cy="815" r="1.6" fill="#6cc0d0"/><path d="M268,812q5,-9 15,-10M274,802l10,12" fill="none" stroke="#bbb" stroke-width="1"/><circle cx="270" cy="815" r="1" fill="#4a8ae0"/><path d="M303,801l17,14M306,815l10,-14" fill="none" stroke="#bbb" stroke-width="1"/><circle cx="311" cy="808" r="1.8" fill="#f0b030"/><path d="M338,801l18,15M340,815l12,-14" fill="none" stroke="#bbb" stroke-width="1"/><circle cx="347" cy="808" r="1.3" fill="#4ad0e0"/><circle cx="344" cy="813" r="1" fill="#f0b030"/><path d="M373,799l17,17M390,799l-17,17" stroke="#c0c0c0" stroke-width="1.1"/><circle cx="381.5" cy="807.5" r="1.6" fill="#6cd0e0"/><circle cx="416.5" cy="807.5" r="7" fill="none" stroke="#c8c8c8" stroke-width="1.1"/><circle cx="416.5" cy="800.5" r="1.6" fill="#d8a050"/><circle cx="416.5" cy="814.5" r="1.6" fill="#d8a050"/><circle cx="409.5" cy="807.5" r="1.6" fill="#d8a050"/><circle cx="423.5" cy="807.5" r="1.6" fill="#d8a050"/><path d="M452,799v15M444,814h16M452,810h4v4" fill="none" stroke="#a8a8a8" stroke-width="1"/><circle cx="452" cy="814" r="1.2" fill="#d8a050"/><path d="M493,799v17M485,807.5h17" stroke="#a8a8a8" stroke-width="1.1"/><circle cx="493" cy="807.5" r="1.5" fill="#d8a050"/><path d="M110.5,830v23" stroke="#4a5260" stroke-width="1"/><rect x="438" y="839" width="4" height="7" rx="2" fill="#e8e8e8"/><rect x="438.5" y="838.5" width="2" height="2" fill="#6c0"/></svg><div class="a" style="left:55px;top:706px;width:1385px;height:9.5px;overflow:hidden"><div class="t" style="left:3px;top:-4.5px;font-size:14.8px;color:#f0f0f0">Action: 指定坡口修改 (CustomizeGroove, cg)</div></div><div class="t" style="left:55.5px;top:722px;font-size:14px;color:#f0f0f0">请选择原始轮廓以修改坡口信息：</div><div class="t" style="left:29.5px;top:739.5px;font-size:14px;color:#eaeaea;transform:rotate(-90deg);transform-origin:center;width:28px;text-align:center">命令</div><div class="a" style="left:55.5px;top:739px;width:1381px;height:21px;border:1.5px solid #c8ccd2;border-radius:2px"></div><div class="t" style="left:48.5px;top:764px;font-size:26px;color:#dedede">N</div><div class="t" style="left:85px;top:764px;font-size:26px;color:#dedede">1</div><div class="t" style="left:15.5px;top:800px;font-size:14.5px;color:#8a8e96;font-family:'Liberation Serif',serif">Ex</div><div class="t" style="left:8px;top:828.5px;font-size:15px;color:#f4f4f4">133117 , 7745</div><div class="t" style="left:8px;top:840px;font-size:15px;color:#f4f4f4">133342 &lt; 3°</div><div class="t" style="left:118px;top:828.5px;font-size:15px;color:#f4f4f4">133117 , 7745</div><div class="t" style="left:118px;top:840px;font-size:15px;color:#f4f4f4">133342 &lt; 3°</div><div class="a" style="left:224px;top:841.5px;width:195px;height:7px;overflow:hidden"><div class="t" style="left:0;top:-5.5px;font-size:14px;color:#f0f0f0">请选择原始轮廓以修改坡口信息：</div></div><div class="a" style="left:455px;top:822px;width:300px;height:32px;overflow:hidden"><div class="t" style="left:10.5px;top:7.5px;font-size:14px;color:#f0f0f0">选择</div><div class="t" style="left:7px;top:22.5px;font-size:15px;color:#f0f0f0">43</div><div class="t" style="left:50px;top:7.5px;font-size:14px;color:#f0f0f0">总长</div><div class="t" style="left:50px;top:22.5px;font-size:15px;color:#f0f0f0">0</div><div class="t" style="left:89px;top:8.5px;font-size:14px;color:#f0f0f0">总面积</div><div class="t" style="left:90px;top:19.5px;font-size:15px;color:#f0f0f0">0</div><div class="t" style="left:145.5px;top:8px;font-size:14px;color:#f0f0f0">当前层</div><div class="t" style="left:142.5px;top:22.5px;font-size:15px;color:#f0f0f0">0</div><div class="t" style="left:203px;top:5.5px;font-size:14px;color:#f0f0f0">网格状态</div></div><div class="t" style="left:659px;top:843.5px;font-size:15px;color:#f4f4f4">100 / 1000</div><!--/BOTTOM-->
<!-- dialog --><!--DIALOG--><div class="a" style="left:424px;top:181px;width:625px;height:486px;background:#fff;border-radius:8px;overflow:hidden;box-shadow:0 0 0 1px rgba(0,0,0,.2),0 6px 24px rgba(0,0,0,.18)"><div class="a" style="left:0;top:0;width:625px;height:23px;background:linear-gradient(90deg,#eff0f6 0%,#f5eef3 22%,#f8eef1 50%,#f6eef3 75%,#f1eef7 100%)"></div><div class="t" style="left:23.7px;top:6.4px;font-size:10.2px;color:#2a2a2a;">设置坡口属性</div><div class="t" style="left:566px;top:7.0px;font-size:9px;color:#444;">?</div><div class="a" style="left:9.5px;top:42px;width:328px;height:397.5px;border:1px solid #dcdcdc;border-radius:4px"></div><div class="a" style="left:13px;top:34px;width:31px;height:14px;background:#fff"></div><div class="t" style="left:14.5px;top:34.0px;font-size:14px;color:#1a1a1a;">信息</div><div class="t" style="left:12.5px;top:49.5px;font-size:14px;color:#1a1a1a;">零件名称：</div><div class="t" style="left:84px;top:49.5px;font-size:14px;color:#1a1a1a;">25</div><div class="t" style="left:12.5px;top:69.5px;font-size:14px;color:#1a1a1a;">零件编号：</div><div class="t" style="left:12.5px;top:89.0px;font-size:14px;color:#1a1a1a;">材质：</div><div class="t" style="left:84px;top:89.0px;font-size:14px;color:#1a1a1a;">Q355B</div><div class="t" style="left:188px;top:89.0px;font-size:14px;color:#1a1a1a;">数量：</div><div class="t" style="left:232.5px;top:89.0px;font-size:14px;color:#1a1a1a;">1</div><div class="t" style="left:12.5px;top:110.0px;font-size:14px;color:#1a1a1a;">厚度：</div><div class="t" style="left:84px;top:110.0px;font-size:14px;color:#1a1a1a;">24</div><div class="a" style="left:188.5px;top:112px;width:10.0px;height:10px;border:1px solid #cfcfcf;border-radius:1px;background:#fff"></div><div class="t" style="left:203.5px;top:110.0px;font-size:14px;color:#1a1a1a;">对称开坡口</div><div class="t" style="left:12.5px;top:132.0px;font-size:14px;color:#1a1a1a;">类型：</div><div class="a" style="left:56px;top:129px;width:278px;height:21px;border:1px solid #222;border-radius:3px;background:#fff"></div><div class="t" style="left:60px;top:132.0px;font-size:15px;color:#1a1a1a;">Vertical</div><div class="a" style="left:13px;top:160.5px;width:170px;height:231px;border:1px solid #dcdcdc;border-radius:4px"></div><div class="a" style="left:16px;top:153px;width:44px;height:14px;background:#fff"></div><div class="t" style="left:18px;top:152.5px;font-size:14px;color:#1a1a1a;">起始点</div><div class="a" style="left:185px;top:160.5px;width:149px;height:231px;border:1px solid #dcdcdc;border-radius:4px"></div><div class="a" style="left:187px;top:153px;width:64px;height:14px;background:#fff"></div><div class="a" style="left:188.5px;top:154.5px;width:11.0px;height:11.0px;border:1px solid #cfcfcf;border-radius:1px;background:#fff"></div><div class="t" style="left:206px;top:153.0px;font-size:14px;color:#1a1a1a;">终止点</div><div class="t" style="left:20.5px;top:169.05px;font-size:14.5px;color:#1a1a1a;">a:</div><div class="a" style="left:39.5px;top:166px;width:78.0px;height:20.5px;border:1px solid #d2d2d2;border-radius:3px;background:#fff"></div><div class="t" style="left:44.0px;top:169.05px;font-size:14.5px;color:#b4b4b4;">0</div><div class="a" style="left:118.5px;top:166px;width:62.0px;height:20.5px;border:1px solid #d2d2d2;border-radius:3px;background:#fff"></div><div class="t" style="left:122px;top:172.3px;font-size:12px;color:#b4b4b4;">...</div><div class="t" style="left:192.5px;top:169.05px;font-size:14.5px;color:#b0b0b0;">a:</div><div class="a" style="left:211.5px;top:166px;width:56.5px;height:20.5px;border:1px solid #d2d2d2;border-radius:3px;background:#fff"></div><div class="t" style="left:216.0px;top:169.05px;font-size:14.5px;color:#b4b4b4;">0</div><div class="a" style="left:269.5px;top:166px;width:62.0px;height:20.5px;border:1px solid #d2d2d2;border-radius:3px;background:#fff"></div><div class="t" style="left:273px;top:172.3px;font-size:12px;color:#b4b4b4;">...</div><div class="t" style="left:20.5px;top:191.35000000000002px;font-size:14.5px;color:#1a1a1a;">b:</div><div class="t" style="left:40px;top:191.60000000000002px;font-size:14px;color:#1a1a1a;">-</div><div class="a" style="left:45.5px;top:188.3px;width:72.0px;height:20.5px;border:1px solid #d2d2d2;border-radius:3px;background:#fff"></div><div class="t" style="left:50.0px;top:191.35000000000002px;font-size:14.5px;color:#b4b4b4;">0</div><div class="a" style="left:118.5px;top:188.3px;width:62.0px;height:20.5px;border:1px solid #d2d2d2;border-radius:3px;background:#fff"></div><div class="t" style="left:122px;top:194.60000000000002px;font-size:12px;color:#b4b4b4;">...</div><div class="t" style="left:192.5px;top:191.35000000000002px;font-size:14.5px;color:#b0b0b0;">b:</div><div class="t" style="left:212px;top:191.60000000000002px;font-size:14px;color:#b0b0b0;">-</div><div class="a" style="left:217.5px;top:188.3px;width:50.5px;height:20.5px;border:1px solid #d2d2d2;border-radius:3px;background:#fff"></div><div class="t" style="left:222.0px;top:191.35000000000002px;font-size:14.5px;color:#b4b4b4;">0</div><div class="a" style="left:269.5px;top:188.3px;width:62.0px;height:20.5px;border:1px solid #d2d2d2;border-radius:3px;background:#fff"></div><div class="t" style="left:273px;top:194.60000000000002px;font-size:12px;color:#b4b4b4;">...</div><div class="t" style="left:16.5px;top:213.75px;font-size:14.5px;color:#1a1a1a;">h1:</div><div class="a" style="left:39.5px;top:210.7px;width:78.0px;height:20.5px;border:1px solid #d2d2d2;border-radius:3px;background:#fff"></div><div class="t" style="left:44.0px;top:213.75px;font-size:14.5px;color:#b4b4b4;">0</div><div class="a" style="left:118.5px;top:210.7px;width:62.0px;height:20.5px;border:1px solid #d2d2d2;border-radius:3px;background:#fff"></div><div class="t" style="left:122px;top:217.0px;font-size:12px;color:#b4b4b4;">...</div><div class="t" style="left:188.5px;top:213.75px;font-size:14.5px;color:#b0b0b0;">h1:</div><div class="a" style="left:211.5px;top:210.7px;width:56.5px;height:20.5px;border:1px solid #d2d2d2;border-radius:3px;background:#fff"></div><div class="t" style="left:216.0px;top:213.75px;font-size:14.5px;color:#b4b4b4;">0</div><div class="a" style="left:269.5px;top:210.7px;width:62.0px;height:20.5px;border:1px solid #d2d2d2;border-radius:3px;background:#fff"></div><div class="t" style="left:273px;top:217.0px;font-size:12px;color:#b4b4b4;">...</div><div class="t" style="left:15.5px;top:236.65px;font-size:14.5px;color:#1a1a1a;">h2:</div><div class="a" style="left:39.5px;top:233.6px;width:78.0px;height:20.5px;border:1px solid #d2d2d2;border-radius:3px;background:#fff"></div><div class="t" style="left:44.0px;top:236.65px;font-size:14.5px;color:#b4b4b4;">0</div><div class="a" style="left:118.5px;top:233.6px;width:62.0px;height:20.5px;border:1px solid #d2d2d2;border-radius:3px;background:#fff"></div><div class="t" style="left:122px;top:239.9px;font-size:12px;color:#b4b4b4;">...</div><div class="t" style="left:187.5px;top:236.65px;font-size:14.5px;color:#b0b0b0;">h2:</div><div class="a" style="left:211.5px;top:233.6px;width:56.5px;height:20.5px;border:1px solid #d2d2d2;border-radius:3px;background:#fff"></div><div class="t" style="left:216.0px;top:236.65px;font-size:14.5px;color:#b4b4b4;">0</div><div class="a" style="left:269.5px;top:233.6px;width:62.0px;height:20.5px;border:1px solid #d2d2d2;border-radius:3px;background:#fff"></div><div class="t" style="left:273px;top:239.9px;font-size:12px;color:#b4b4b4;">...</div><div class="t" style="left:17.5px;top:259.65000000000003px;font-size:14.5px;color:#1a1a1a;">r1:</div><div class="a" style="left:39.5px;top:256.6px;width:141.0px;height:20.5px;border:1px solid #d2d2d2;border-radius:3px;background:#fff"></div><div class="t" style="left:44.0px;top:259.65000000000003px;font-size:14.5px;color:#b4b4b4;">0</div><div class="t" style="left:189.5px;top:259.65000000000003px;font-size:14.5px;color:#b0b0b0;">r1:</div><div class="a" style="left:211.5px;top:256.6px;width:120.0px;height:20.5px;border:1px solid #d2d2d2;border-radius:3px;background:#fff"></div><div class="t" style="left:216.0px;top:259.65000000000003px;font-size:14.5px;color:#b4b4b4;">0</div><div class="t" style="left:17.5px;top:282.05px;font-size:14.5px;color:#1a1a1a;">r2:</div><div class="a" style="left:39.5px;top:279px;width:141.0px;height:20.5px;border:1px solid #d2d2d2;border-radius:3px;background:#fff"></div><div class="t" style="left:44.0px;top:282.05px;font-size:14.5px;color:#b4b4b4;">0</div><div class="t" style="left:189.5px;top:282.05px;font-size:14.5px;color:#b0b0b0;">r2:</div><div class="a" style="left:211.5px;top:279px;width:120.0px;height:20.5px;border:1px solid #d2d2d2;border-radius:3px;background:#fff"></div><div class="t" style="left:216.0px;top:282.05px;font-size:14.5px;color:#b4b4b4;">0</div><div class="t" style="left:20.5px;top:304.05px;font-size:14.5px;color:#1a1a1a;">c:</div><div class="a" style="left:39.5px;top:301px;width:141.0px;height:20.5px;border:1px solid #3c3c3c;border-bottom:1.5px solid #3c3c3c;border-radius:3px;background:#fff"></div><div class="t" style="left:44.0px;top:304.05px;font-size:14.5px;color:#1a1a1a;">0</div><div class="t" style="left:192.5px;top:304.05px;font-size:14.5px;color:#b0b0b0;">c:</div><div class="a" style="left:211.5px;top:301px;width:120.0px;height:20.5px;border:1px solid #d2d2d2;border-radius:3px;background:#fff"></div><div class="t" style="left:216.0px;top:304.05px;font-size:14.5px;color:#b4b4b4;">0</div><div class="t" style="left:14.5px;top:326.45px;font-size:14.5px;color:#1a1a1a;">w1:</div><div class="a" style="left:39.5px;top:323.4px;width:141.0px;height:20.5px;border:1px solid #3c3c3c;border-bottom:1.5px solid #3c3c3c;border-radius:3px;background:#fff"></div><div class="t" style="left:44.0px;top:326.45px;font-size:14.5px;color:#1a1a1a;">0.00</div><div class="t" style="left:186.5px;top:326.45px;font-size:14.5px;color:#b0b0b0;">w1:</div><div class="a" style="left:211.5px;top:323.4px;width:120.0px;height:20.5px;border:1px solid #d2d2d2;border-radius:3px;background:#fff"></div><div class="t" style="left:216.0px;top:326.45px;font-size:14.5px;color:#b4b4b4;">0.00</div><div class="t" style="left:19.5px;top:349.45px;font-size:14.5px;color:#1a1a1a;">d:</div><div class="t" style="left:40px;top:349.7px;font-size:14px;color:#1a1a1a;">-</div><div class="a" style="left:45.5px;top:346.4px;width:135.0px;height:20.5px;border:1px solid #3c3c3c;border-bottom:1.5px solid #3c3c3c;border-radius:3px;background:#fff"></div><div class="t" style="left:50.0px;top:349.45px;font-size:14.5px;color:#1a1a1a;">0</div><div class="t" style="left:191.5px;top:349.45px;font-size:14.5px;color:#b0b0b0;">d:</div><div class="t" style="left:212px;top:349.7px;font-size:14px;color:#b0b0b0;">-</div><div class="a" style="left:217.5px;top:346.4px;width:114.0px;height:20.5px;border:1px solid #d2d2d2;border-radius:3px;background:#fff"></div><div class="t" style="left:222.0px;top:349.45px;font-size:14.5px;color:#b4b4b4;">0</div><div class="t" style="left:14.5px;top:371.65000000000003px;font-size:14.5px;color:#1a1a1a;">w2:</div><div class="a" style="left:39.5px;top:368.6px;width:141.0px;height:20.5px;border:1px solid #3c3c3c;border-bottom:1.5px solid #3c3c3c;border-radius:3px;background:#fff"></div><div class="t" style="left:44.0px;top:371.65000000000003px;font-size:14.5px;color:#1a1a1a;">0.00</div><div class="t" style="left:186.5px;top:371.65000000000003px;font-size:14.5px;color:#b0b0b0;">w2:</div><div class="a" style="left:211.5px;top:368.6px;width:120.0px;height:20.5px;border:1px solid #d2d2d2;border-radius:3px;background:#fff"></div><div class="t" style="left:216.0px;top:371.65000000000003px;font-size:14.5px;color:#b4b4b4;">0.00</div><div class="t" style="left:12.5px;top:396.7px;font-size:14px;color:#1a1a1a;">坡口间隙</div><div class="a" style="left:71.5px;top:393.5px;width:80.5px;height:20.0px;border:1px solid #3c3c3c;border-bottom:1.5px solid #3c3c3c;border-radius:3px;background:#fff"></div><div class="t" style="left:76px;top:396.45px;font-size:14.5px;color:#1a1a1a;">0</div><div class="t" style="left:12.5px;top:421.0px;font-size:14px;color:#1a1a1a;">坡口字符</div><div class="a" style="left:71.5px;top:417px;width:80.5px;height:21px;border:1px solid #3c3c3c;border-bottom:1.5px solid #3c3c3c;border-radius:3px;background:#fff"></div><div class="t" style="left:76px;top:421.0px;font-size:14px;color:#333;font-weight:normal">I</div><div class="a" style="left:155px;top:417px;width:88px;height:21px;border:1px solid #555;border-radius:3px;background:#fff"></div><div class="t" style="left:184px;top:421.0px;font-size:14px;color:#1a1a1a;">获取</div><div class="a" style="left:246px;top:417px;width:88px;height:21px;border:1px solid #555;border-radius:3px;background:#fff"></div><div class="t" style="left:275px;top:421.0px;font-size:14px;color:#1a1a1a;">设置</div><div class="a" style="left:519.5px;top:32.5px;width:97.5px;height:22.0px;border:1px solid #555;border-radius:3px;background:#fff"></div><div class="t" style="left:525px;top:36.5px;font-size:14px;color:#1a1a1a;">设置标定模式</div><div class="a" style="left:342px;top:58.5px;width:274.5px;height:192.5px;background:#000"></div><div class="a" style="left:342.5px;top:256.5px;width:274px;height:192px;background:#000"></div><div class="a" style="left:491.5px;top:456.5px;width:60.0px;height:21.5px;border:1px solid #555;border-radius:3px;background:#fff"></div><div class="t" style="left:509px;top:460.25px;font-size:14.5px;color:#1a1a1a;">OK</div><div class="a" style="left:556.5px;top:456.5px;width:60.0px;height:21.5px;border:1px solid #555;border-radius:3px;background:#fff"></div><div class="t" style="left:563.5px;top:460.25px;font-size:14.5px;color:#1a1a1a;">Cancel</div><svg style="left:0;top:0" width="625" height="486" viewBox="0 0 625 486"><g transform="translate(5,4)"><path d="M0.5,4.5 Q3,0.5 7,0.3 Q11.5,0.5 13.5,3.5 L10,6.5 Q7,4 4,6.5 L3.5,9.5z" fill="#e41a1a"/><circle cx="7" cy="8" r="2.3" fill="#e41a1a"/><path d="M2,9.5 Q4,13.5 7.5,13.5 Q12,13 13.5,9 L10.5,8 Q9.5,11 7,11" fill="#b8b8b8"/></g><path d="M602.5,7.5l8.5,8.5M611,7.5l-8.5,8.5" stroke="#222" stroke-width="1"/><path d="M321.5,136.5l4,4l4,-4" fill="none" stroke="#333" stroke-width="1"/><path d="M171.5,174.3l4,4l4,-4" fill="none" stroke="#c4c4c4" stroke-width="1"/><path d="M322.5,174.3l4,4l4,-4" fill="none" stroke="#c4c4c4" stroke-width="1"/><path d="M171.5,196.60000000000002l4,4l4,-4" fill="none" stroke="#c4c4c4" stroke-width="1"/><path d="M322.5,196.60000000000002l4,4l4,-4" fill="none" stroke="#c4c4c4" stroke-width="1"/><path d="M171.5,219.0l4,4l4,-4" fill="none" stroke="#c4c4c4" stroke-width="1"/><path d="M322.5,219.0l4,4l4,-4" fill="none" stroke="#c4c4c4" stroke-width="1"/><path d="M171.5,241.9l4,4l4,-4" fill="none" stroke="#c4c4c4" stroke-width="1"/><path d="M322.5,241.9l4,4l4,-4" fill="none" stroke="#c4c4c4" stroke-width="1"/></svg><!--PREVIEW--><svg style="left:0;top:0" width="625" height="486" viewBox="0 0 625 486"><g transform="translate(342,58.5)"><clipPath id="c1"><path d="M23.4,21.9H254.2C257,27 259.5,31 260.5,35.7C264,44 266.5,50 266.5,58C266.5,68 263,76 259.8,82.5C254,95 248,104 245.3,111.5C241,121 239.7,127 239.7,133.8C239.7,142 240.5,148 242,153.9C245,160 249,164 254.2,168.4H23.4Z"/></clipPath><g clip-path="url(#c1)" stroke="#e6e2a2" stroke-width="1.1"><path d="M84.5,1.9L-121.1,221.9"/><path d="M126.9,1.9L-78.7,221.9"/><path d="M167.7,1.9L-37.9,221.9"/><path d="M208.7,1.9L3.1,221.9"/><path d="M251.1,1.9L45.5,221.9"/><path d="M292.5,1.9L86.9,221.9"/><path d="M333.9,1.9L128.3,221.9"/><path d="M375.3,1.9L169.7,221.9"/></g><path d="M23.4,21.9H254.2C257,27 259.5,31 260.5,35.7C264,44 266.5,50 266.5,58C266.5,68 263,76 259.8,82.5C254,95 248,104 245.3,111.5C241,121 239.7,127 239.7,133.8C239.7,142 240.5,148 242,153.9C245,160 249,164 254.2,168.4H23.4Z" fill="none" stroke="#e6e2a2" stroke-width="1.2"/></g><g transform="translate(342,256)"><clipPath id="c2"><path d="M14.5,66.2L122.2,43.5L142.7,38.4H257.6C262,45 267,54 269.8,65.8C269,82 262,98 253,108C248,114 245,119 244,124C242,133 242.6,140 244,145C247,151 251,154 257.6,157.9H137.2L14.5,131.1Z"/></clipPath><g clip-path="url(#c2)" stroke="#bdb983" stroke-width="0.9"><path d="M88.5,-1.6000000000000014L-202.4,238.4"/><path d="M132.5,-1.6000000000000014L-158.4,238.4"/><path d="M176.5,-1.6000000000000014L-114.4,238.4"/><path d="M220.5,-1.6000000000000014L-70.4,238.4"/><path d="M264.5,-1.6000000000000014L-26.4,238.4"/><path d="M306.5,-1.6000000000000014L15.6,238.4"/><path d="M351.5,-1.6000000000000014L60.6,238.4"/><path d="M396.5,-1.6000000000000014L105.6,238.4"/><path d="M440.5,-1.6000000000000014L149.6,238.4"/></g><path d="M14.5,66.2L122.2,43.5L142.7,38.4H257.6C262,45 267,54 269.8,65.8C269,82 262,98 253,108C248,114 245,119 244,124C242,133 242.6,140 244,145C247,151 251,154 257.6,157.9H137.2L14.5,131.1Z" fill="none" stroke="#bdb983" stroke-width="1"/><g stroke="#e6e6e6" stroke-width="0.9" fill="none"><path d="M14.5,13.8V59.1M142.7,13.8V30.1M14.5,22.3H142.7M14.5,139.4V182.9M138.3,166.1V182.9M14.5,174H138.3"/><path d="M15,25.6C35,28 48,33 56,43C58,47 60,51 62.4,55.8"/><path d="M15,171.3C28,170 38,167 46,161C53,156 58,149 61.3,141.6"/></g><g fill="#e6e6e6"><path d="M14.5,22.3l6,-2v4z M142.7,22.3l-6,-2v4z M14.5,174l6,-2v4z M138.3,174l-6,-2v4z M15,25.6l6,-1.5l-0.5,4z M62.4,55.8l-4.5,-4l3,-2z M15,171.3l5.5,-2.5l0.5,4z M61.3,141.6l-0.5,6l-3,-2z"/></g><g fill="#fff" font-family="Liberation Sans" font-size="17.5"><text x="62.5" y="21.8" textLength="32" lengthAdjust="spacingAndGlyphs">w1</text><text x="59.5" y="174" textLength="33" lengthAdjust="spacingAndGlyphs">w2</text><text x="37" y="42.5" textLength="12.5" lengthAdjust="spacingAndGlyphs">c</text><text x="35.5" y="171" font-size="20">d</text></g></g></svg><!--/PREVIEW--></div><!--/DIALOG-->
</body></html>
